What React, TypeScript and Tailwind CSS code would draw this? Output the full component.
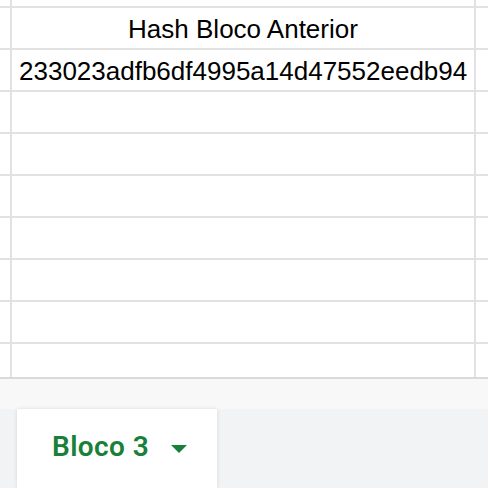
const rowCount = 8

function Row({ children, center }: { children?: React.ReactNode; center?: boolean }) {
  return (
    <div className="flex h-[42px] border-b-2 border-[#e2e2e2]">
      <div className="w-[12px] shrink-0 border-r-2 border-[#e2e2e2]" />
      <div
        className={`flex w-[464px] shrink-0 items-end border-r-2 border-[#e2e2e2] pb-[4px] text-[26px] leading-[30px] text-black ${
          center ? 'justify-center' : 'pl-[7px]'
        }`}
      >
        {children}
      </div>
      <div className="flex-1" />
    </div>
  )
}

export default function App() {
  const blank = Array.from({ length: rowCount - 2 })
  return (
    <div
      className="flex h-[488px] w-[488px] flex-col overflow-hidden bg-white"
      style={{ fontFamily: '"Liberation Sans", Arial, sans-serif' }}
    >
      {/* grid */}
      <div className="flex h-[8px] border-b-2 border-[#e2e2e2]">
        <div className="w-[12px] shrink-0 border-r-2 border-[#e2e2e2]" />
        <div className="w-[464px] shrink-0 border-r-2 border-[#e2e2e2]" />
      </div>
      <Row center>Hash Bloco Anterior</Row>
      <Row>233023adfb6df4995a14d47552eedb94</Row>
      {blank.map((_, i) => (
        <Row key={i} />
      ))}
      <div className="flex h-[35px] border-b-2 border-[#dadada]">
        <div className="w-[12px] shrink-0 border-r-2 border-[#e2e2e2]" />
        <div className="w-[464px] shrink-0 border-r-2 border-[#e2e2e2]" />
      </div>

      {/* sheet tabs */}
      <div className="h-[30px] bg-[#f8f8f8]" />
      <div className="flex flex-1 bg-[#f1f3f4] pl-[17px]">
        <div className="flex w-[200px] items-start bg-white pl-[35px] pt-[22px] shadow-[0_0_4px_rgba(0,0,0,0.12)]">
          <span
            className="text-[28px] font-semibold leading-[32px] tracking-[0.4px] text-[#188038]"
            style={{ fontFamily: 'Roboto, "Open Sans", sans-serif' }}
          >
            Bloco 3
          </span>
          <svg width="16" height="8" viewBox="0 0 16 8" className="ml-[22px] mt-[14px]">
            <path d="M0 0 L16 0 L8 8 Z" fill="#188038" />
          </svg>
        </div>
      </div>
    </div>
  )
}
